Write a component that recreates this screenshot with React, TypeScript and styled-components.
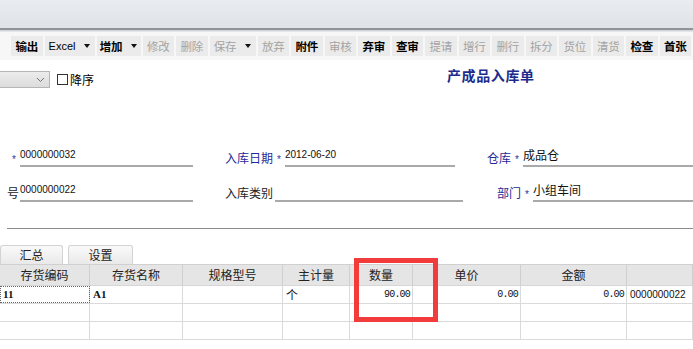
import React from "react"
import styled, { createGlobalStyle } from "styled-components"

const GlobalStyle = createGlobalStyle`
  html, body {
    margin: 0;
    padding: 0;
    background: #ffffff;
  }
  body {
    font-family: "Noto Sans CJK SC", "Liberation Sans", sans-serif;
    font-size: 12px;
    color: #000;
  }
`

const cjk = `"Noto Sans CJK SC", "Liberation Sans", sans-serif`

const tools = [
  { label: "输出", on: true },
  { label: "Excel", on: true, arrow: true, width: 50 },
  { label: "增加", on: true, arrow: true, width: 44 },
  { label: "修改" },
  { label: "删除" },
  { label: "保存", arrow: true, width: 46 },
  { label: "放弃" },
  { label: "附件", on: true },
  { label: "审核" },
  { label: "弃审", on: true },
  { label: "查审", on: true },
  { label: "提请" },
  { label: "增行" },
  { label: "删行" },
  { label: "拆分" },
  { label: "货位" },
  { label: "清货" },
  { label: "检查", on: true },
  { label: "首张", on: true },
]

const columns = [
  { title: "存货编码", width: 90 },
  { title: "存货名称", width: 93 },
  { title: "规格型号", width: 100 },
  { title: "主计量", width: 67 },
  { title: "数量", width: 63 },
  { title: "单价", width: 108 },
  { title: "金额", width: 106 },
  { title: "", width: 66 },
]

const rows = [
  ["11", "A1", "", "个", "90.00", "0.00", "0.00", "0000000022"],
  ["", "", "", "", "", "", "", ""],
  ["", "", "", "", "", "", "", ""],
]

const App = () => {
  return (
    <>
      <GlobalStyle />
      <Page>
        <TopBand />
        <BandEdge />
        <Toolbar>
          {tools.map((t) => (
            <ToolButton key={t.label} $on={!!t.on} $width={t.width || 31.5} $latin={t.label === "Excel"}>
              <span>{t.label}</span>
              {t.arrow && <Caret />}
            </ToolButton>
          ))}
        </Toolbar>

        <HeaderRow>
          <Controls>
            <SortSelect>
              <svg width="9" height="6" viewBox="0 0 9 6">
                <path d="M1 1 L4.5 4.5 L8 1" fill="none" stroke="#777" strokeWidth="1" />
              </svg>
            </SortSelect>
            <CheckBox />
            <CheckLabel>降序</CheckLabel>
          </Controls>
          <Title>产成品入库单</Title>
        </HeaderRow>

        <Form>
          <FormRow>
            <Field $width={193}>
              <Label $w={18} $align="right"><Star>*</Star></Label>
              <Value $latin>0000000032</Value>
            </Field>
            <Field $width={230} $gap={32}>
              <Label $blue>入库日期</Label>
              <Star $pad>*</Star>
              <Value $latin>2012-06-20</Value>
            </Field>
            <Field $gap={32} $grow>
              <Label $blue>仓库</Label>
              <Star $pad>*</Star>
              <Value>成品仓</Value>
            </Field>
          </FormRow>
          <FormRow>
            <Field $width={193}>
              <Label $w={18} $indent={7}>号</Label>
              <Value $latin>0000000022</Value>
            </Field>
            <Field $width={238} $gap={32}>
              <Label>入库类别</Label>
              <Value />
            </Field>
            <Field $gap={34} $grow>
              <Label $blue>部门</Label>
              <Star $pad>*</Star>
              <Value>小组车间</Value>
            </Field>
          </FormRow>
        </Form>

        <Divider />

        <Tabs>
          <Tab $width={63} $offset={0}>汇总</Tab>
          <Tab $width={65} $offset={5}>设置</Tab>
        </Tabs>

        <Grid>
          <HeadRow>
            {columns.map((c, i) => (
              <HeadCell key={i} $width={c.width}>{c.title}</HeadCell>
            ))}
          </HeadRow>
          {rows.map((r, ri) => (
            <BodyRow key={ri}>
              {r.map((v, ci) => (
                <Cell
                  key={ci}
                  $width={columns[ci].width}
                  $kind={ci <= 1 ? "code" : ci >= 4 && ci <= 6 ? "num" : ci === 7 ? "latin" : "text"}
                  $focus={ri === 0 && ci === 0}
                >
                  {v}
                </Cell>
              ))}
            </BodyRow>
          ))}
          <Highlight />
        </Grid>
      </Page>
    </>
  )
}

const Page = styled.div`
  position: relative;
  width: 693px;
  height: 349px;
  overflow: hidden;
  background: #fff;
`

const TopBand = styled.div`
  height: 28px;
  background: linear-gradient(#e9ecf0, #dfe3e8);
`

const BandEdge = styled.div`
  height: 4px;
  border-top: 2px solid #8f9499;
  background: linear-gradient(#c9cdd2, #eceef0);
  box-sizing: border-box;
`

const Toolbar = styled.div`
  display: flex;
  align-items: center;
  gap: 2px;
  height: 28px;
  padding-left: 11px;
  background: #f7f7f7;
`

const ToolButton = styled.div<{ $on: boolean; $width: number; $latin: boolean }>`
  flex: none;
  display: flex;
  align-items: center;
  justify-content: center;
  gap: 9px;
  width: ${(p) => p.$width}px;
  height: 20px;
  background: #ebebeb;
  color: ${(p) => (p.$on ? "#000" : "#a3a3a3")};
  font-family: ${(p) => (p.$latin ? `"Liberation Sans", sans-serif` : cjk)};
  font-size: ${(p) => (p.$latin ? "11px" : "11.5px")};
  font-weight: ${(p) => (p.$on && !p.$latin ? 600 : 400)};
  letter-spacing: ${(p) => (p.$latin ? "0" : "-0.3px")};
  white-space: nowrap;
`

const Caret = styled.i`
  width: 0;
  height: 0;
  border-left: 3.5px solid transparent;
  border-right: 3.5px solid transparent;
  border-top: 4px solid #111;
`

const HeaderRow = styled.div`
  display: grid;
  grid-template-columns: 447px auto;
  height: 32px;
  align-items: start;
`

const Controls = styled.div`
  display: flex;
  align-items: center;
  padding-top: 11px;
`

const SortSelect = styled.div`
  width: 50px;
  height: 17px;
  box-sizing: border-box;
  border: 1px solid #b5b5b5;
  border-left: none;
  background: linear-gradient(#ececec, #dcdcdc);
  display: flex;
  align-items: center;
  justify-content: flex-end;
  padding-right: 4px;
`

const CheckBox = styled.span`
  width: 11px;
  height: 11px;
  box-sizing: border-box;
  border: 1px solid #333;
  background: #fff;
  margin-left: 7px;
`

const CheckLabel = styled.span`
  margin-left: 2px;
  font-size: 12px;
  font-family: ${cjk};
`

const Title = styled.div`
  padding-top: 5px;
  font-family: ${cjk};
  font-size: 14px;
  font-weight: 700;
  letter-spacing: 0.6px;
  color: #1d2b8c;
`

const Form = styled.div`
  display: flex;
  flex-direction: column;
  gap: 15px;
  padding-top: 55px;
  height: 136px;
  box-sizing: border-box;
`

const FormRow = styled.div`
  display: flex;
  align-items: flex-end;
  height: 20px;
`

const Field = styled.div<{ $width?: number; $gap?: number; $grow?: boolean }>`
  display: flex;
  align-items: flex-end;
  flex: ${(p) => (p.$grow ? "1" : "none")};
  width: ${(p) => (p.$width ? `${p.$width}px` : "auto")};
  margin-left: ${(p) => p.$gap || 0}px;
`

const Label = styled.span<{ $blue?: boolean; $w?: number; $align?: string; $indent?: number }>`
  flex: none;
  width: ${(p) => (p.$w ? `${p.$w}px` : "auto")};
  box-sizing: border-box;
  padding-left: ${(p) => p.$indent || 0}px;
  text-align: ${(p) => p.$align || "left"};
  font-family: ${cjk};
  font-size: 12px;
  line-height: 18px;
  color: ${(p) => (p.$blue ? "#1f2a96" : "#222")};
  margin-right: 2px;
`

const Star = styled.span<{ $pad?: boolean }>`
  font-family: "Liberation Sans", sans-serif;
  font-size: 10px;
  line-height: 14px;
  color: #2a35a0;
  margin: ${(p) => (p.$pad ? "0 4px 0 2px" : "0 2px 0 0")};
`

const Value = styled.div<{ $latin?: boolean }>`
  flex: 1;
  height: 18px;
  line-height: 16px;
  border-bottom: 2px solid #a9a9a9;
  font-family: ${(p) => (p.$latin ? `"Liberation Sans", sans-serif` : cjk)};
  font-size: ${(p) => (p.$latin ? "10px" : "12px")};
  color: #111;
  white-space: nowrap;
`

const Divider = styled.div`
  margin-left: 7px;
  border-top: 1px solid #8c8c8c;
`

const Tabs = styled.div`
  display: flex;
  align-items: flex-end;
  height: 36px;
  border-bottom: 1px solid #d0d0d0;
  box-sizing: border-box;
`

const Tab = styled.div<{ $width: number; $offset: number }>`
  width: ${(p) => p.$width}px;
  height: 19px;
  margin-left: ${(p) => p.$offset}px;
  box-sizing: border-box;
  border: 1px solid #d3d3d3;
  border-bottom: none;
  border-radius: 3px 3px 0 0;
  background: linear-gradient(#fafafa, #e9e9e9);
  font-family: ${cjk};
  font-size: 12px;
  line-height: 18px;
  text-align: center;
  color: #222;
`

const Grid = styled.div`
  position: relative;
`

const HeadRow = styled.div`
  display: flex;
  height: 20px;
  background: #e5e5e5;
  border-bottom: 1px solid #d6d6d6;
`

const HeadCell = styled.div<{ $width: number }>`
  flex: none;
  width: ${(p) => p.$width}px;
  box-sizing: border-box;
  border-right: 1px solid #cfcfcf;
  font-family: ${cjk};
  font-size: 12px;
  line-height: 20px;
  text-align: center;
  color: #222;
`

const BodyRow = styled.div`
  display: flex;
  height: 17px;
  border-bottom: 1px solid #dadada;
`

const Cell = styled.div<{ $width: number; $kind: string; $focus: boolean }>`
  flex: none;
  width: ${(p) => p.$width}px;
  box-sizing: border-box;
  border-right: 1px solid #dadada;
  outline: ${(p) => (p.$focus ? "1px dotted #666" : "none")};
  outline-offset: -1px;
  padding: ${(p) => (p.$kind === "num" ? "0 2px 0 0" : "0 3px")};
  text-align: ${(p) => (p.$kind === "num" ? "right" : "left")};
  line-height: 17px;
  white-space: nowrap;
  color: #111;
  font-family: ${(p) =>
    p.$kind === "code"
      ? `"Liberation Serif", serif`
      : p.$kind === "num"
      ? `"Liberation Mono", monospace`
      : p.$kind === "latin"
      ? `"Liberation Sans", sans-serif`
      : cjk};
  font-size: ${(p) => (p.$kind === "code" ? "11px" : p.$kind === "num" ? "10px" : p.$kind === "latin" ? "10px" : "12px")};
  font-weight: ${(p) => (p.$kind === "code" ? 600 : 400)};
  letter-spacing: ${(p) => (p.$kind === "num" ? "-0.8px" : "0")};
`

const Highlight = styled.div`
  position: absolute;
  left: 354px;
  top: -7px;
  width: 84px;
  height: 64px;
  box-sizing: border-box;
  border: 5px solid #f23b3b;
  pointer-events: none;
`

export default App
